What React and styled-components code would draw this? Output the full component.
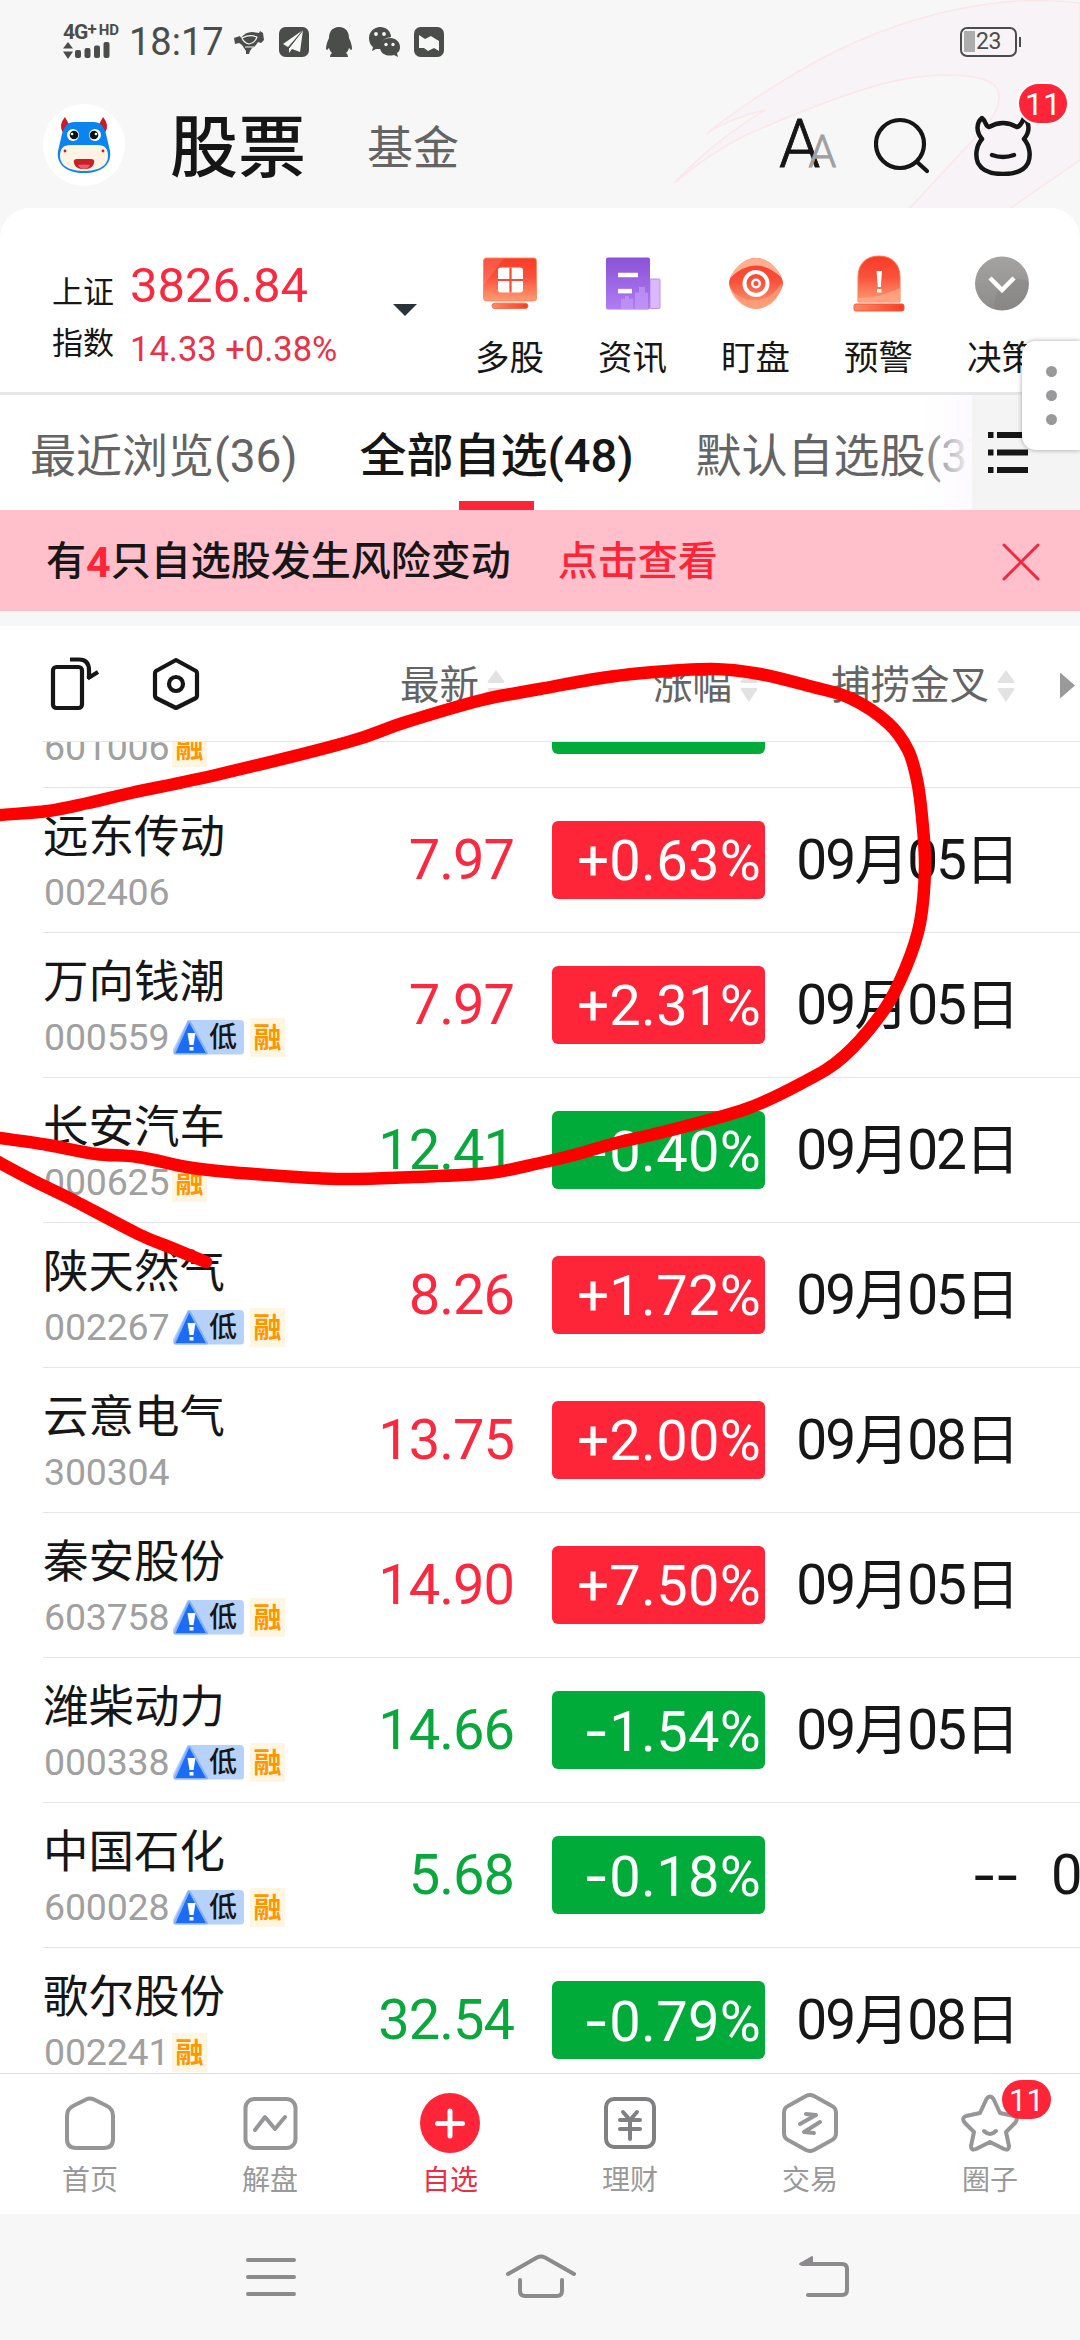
import styled, { createGlobalStyle } from "styled-components";

const stocks = [
  { name: "大秦铁路", code: "601006", tags: ["margin"], price: "6.07", change: "-0.33%", date: "09月05日" },
  { name: "远东传动", code: "002406", tags: [], price: "7.97", change: "+0.63%", date: "09月05日" },
  { name: "万向钱潮", code: "000559", tags: ["low", "margin"], price: "7.97", change: "+2.31%", date: "09月05日" },
  { name: "长安汽车", code: "000625", tags: ["margin"], price: "12.41", change: "-0.40%", date: "09月02日" },
  { name: "陕天然气", code: "002267", tags: ["low", "margin"], price: "8.26", change: "+1.72%", date: "09月05日" },
  { name: "云意电气", code: "300304", tags: [], price: "13.75", change: "+2.00%", date: "09月08日" },
  { name: "秦安股份", code: "603758", tags: ["low", "margin"], price: "14.90", change: "+7.50%", date: "09月05日" },
  { name: "潍柴动力", code: "000338", tags: ["low", "margin"], price: "14.66", change: "-1.54%", date: "09月05日" },
  { name: "中国石化", code: "600028", tags: ["low", "margin"], price: "5.68", change: "-0.18%", date: "--", next: "0" },
  { name: "歌尔股份", code: "002241", tags: ["margin"], price: "32.54", change: "-0.79%", date: "09月08日" },
];

const loop = [
  [-8, 816], [0, 815], [48, 811], [88, 803], [131, 793], [220, 774], [348, 742], [403, 723],
  [482, 700], [540, 689], [595, 679], [643, 673], [712, 669], [760, 674], [809, 686],
  [850, 698], [888, 723], [908, 750], [917, 780], [922, 817], [925, 867], [920, 923],
  [906, 967], [884, 1010], [843, 1057], [802, 1083], [746, 1109], [667, 1131], [616, 1143],
  [574, 1155], [540, 1163], [489, 1173], [413, 1177], [337, 1179], [241, 1173], [193, 1168],
  [138, 1157], [96, 1154], [48, 1145], [0, 1138], [-8, 1137],
];

const tail = [[-8, 1158], [0, 1163], [34, 1181], [69, 1198], [138, 1234], [172, 1248], [206, 1262]];

const smooth = (pts) =>
  pts.reduce((d, p, i) => {
    if (i === 0) return `M${p[0]} ${p[1]}`;
    const a = pts[i - 2] || pts[i - 1];
    const b = pts[i - 1];
    const c = pts[i + 1] || p;
    return `${d}C${b[0] + (p[0] - a[0]) / 6} ${b[1] + (p[1] - a[1]) / 6} ${p[0] - (c[0] - b[0]) / 6} ${
      p[1] - (c[1] - b[1]) / 6
    } ${p[0]} ${p[1]}`;
  }, "");

const Signal = () => (
  <svg width="48" height="18" viewBox="0 0 48 18" fill="#4b4d4b">
    <path d="M5 0l5 6.500H0zM0 9.500h10L5 17z" />
    <rect x="12" y="8" width="6" height="8" rx="2" />
    <rect x="21.500" y="6" width="6" height="10" rx="2" />
    <rect x="31" y="3.500" width="6" height="12.500" rx="2" />
    <rect x="40.500" y="0" width="6" height="16" rx="2" />
  </svg>
);

const StatusIcons = () => (
  <svg width="212" height="32" viewBox="0 0 212 32" fill="#4b4d4b">
    <path d="M0 12l6-2 1 2q4-6 11-6l7 1 1-2 3 2 1 7-3 3-3-1q-3 5-6 6l-2 3-1 3h-3v-3l-4-6-3-2-4 1z" />
    <path d="M8 12q8-4 15-1-2 6-8 7-5-1-7-6zM11 21h9" fill="none" stroke="#f7f7f7" strokeWidth="1.200" />
    <rect x="45" y="1" width="30" height="30" rx="6.500" />
    <path d="M69 4L49 18l5 3zM69 4L55 22v5l3-4 8 3z" fill="#f7f7f7" />
    <path d="M69 4L55 22" stroke="#4b4d4b" strokeWidth="1" />
    <path d="M105 1c7 0 10 5 10 11 2 4 3 8 3 11-1 2-2 0-3-1q-1 4-3 5 2 1 2 4h-18q0-3 2-4-2-1-3-5c-1 1-2 3-3 1 0-3 1-7 3-11 0-6 3-11 10-11z" />
    <path d="M146 1c6 0 11 4 11 10q-10 1-10 10l1 2h-6l-4 2 1-4c-3-2-4-6-4-9 0-6 5-11 11-11z" />
    <path d="M156 12c6 0 10 4 10 9 0 3-1 5-3 6l1 4-4-2c-7 2-14-1-14-8 0-5 4-9 10-9z" />
    <g fill="#f7f7f7">
      <circle cx="142" cy="8" r="1.900" />
      <circle cx="150" cy="8" r="1.900" />
      <circle cx="152" cy="18.500" r="1.700" />
      <circle cx="159" cy="18.500" r="1.700" />
    </g>
    <rect x="180" y="1" width="30" height="30" rx="6.500" />
    <path d="M185 9l6 4 6-3 3 2 5 3v10l-5-3-6 3-4-3-5 0z" fill="#f7f7f7" />
  </svg>
);

const Swoosh = () => (
  <SwooshSvg viewBox="670 0 410 208" fill="#f8f3f7" stroke="#fbe7ea" strokeWidth="1.500">
    <path d="M706 134C750 99 790 76 815 62C870 32 930 12 988 4C1020 -1 1050 0 1080 3V160L1008 210H908L984 128C998 113 1004 95 994 85C980 72 930 74 905 79C870 85 810 107 746 135Q710 153 674 183Q715 140 765 110Q730 118 706 134Z" />
  </SwooshSvg>
);

const Cow = () => (
  <svg width="82" height="82" viewBox="0 0 82 82">
    <circle cx="41" cy="41" r="41" fill="#fff" />
    <path d="M22 13q-7 8-2 16l8-5zM60 13q7 8 2 16l-8-5z" fill="#cc1c28" />
    <path d="M31 18h20q9 0 12 12l4 17c2 14-9 22-26 22S13 61 15 47l4-17q3-12 12-12z" fill="#0a84ee" />
    <path d="M27 41h28q10 0 10 11c0 10-10 15-24 15s-24-5-24-15q0-11 10-11z" fill="#fff3e3" />
    <path d="M34 55h14q4 0 3 4c-1 4-4 6-10 6s-9-2-10-6q-1-4 3-4z" fill="#c91f27" />
    <path d="M35 61q6-1 12 0-2 4-6 4t-6-4z" fill="#f15b63" />
    <circle cx="30" cy="31" r="6" fill="#fff" />
    <circle cx="52" cy="31" r="6" fill="#fff" />
    <circle cx="31" cy="31" r="4.300" fill="#111" />
    <circle cx="51" cy="31" r="4.300" fill="#111" />
    <circle cx="29" cy="30" r="1.300" fill="#fff" />
    <circle cx="53" cy="30" r="1.300" fill="#fff" />
    <circle cx="22" cy="47" r="1.400" fill="#c91f27" />
    <circle cx="60" cy="47" r="1.400" fill="#c91f27" />
  </svg>
);

const SearchIcon = () => (
  <svg width="56" height="58" viewBox="0 0 56 58" fill="none" stroke="#161616" strokeWidth="4.200" strokeLinecap="round">
    <circle cx="26" cy="28" r="24" />
    <path d="M43 46l10 9" />
  </svg>
);

const CowOutline = () => (
  <svg width="58" height="62" viewBox="0 0 58 62" fill="none" stroke="#161616" strokeWidth="4.500" strokeLinecap="round" strokeLinejoin="round">
    <path d="M8 4C2 9 2 18 8 25C2 32 1 42 4 49C8 57 16 60 29 60S50 57 54 49C57 42 56 32 50 25C56 18 56 9 50 4C48 8 47 12 43 13Q29 5 15 13C11 12 12 7 8 4Z" />
    <path d="M18 41q11 4 22 0" />
  </svg>
);

const Gradients = () => (
  <HiddenSvg width="0" height="0">
    <defs>
      <linearGradient id="hot" x1="0" y1="0" x2="0" y2="1">
        <stop offset="0" stopColor="#fb3a26" />
        <stop offset="0.450" stopColor="#f9513b" />
        <stop offset="1" stopColor="#fd9c74" />
      </linearGradient>
      <linearGradient id="bar" x1="0" y1="0" x2="1" y2="0">
        <stop offset="0" stopColor="#fd8a66" />
        <stop offset="1" stopColor="#f83c20" />
      </linearGradient>
      <linearGradient id="violet" x1="0" y1="0" x2="0" y2="1">
        <stop offset="0" stopColor="#8a52d6" />
        <stop offset="1" stopColor="#b07cf2" />
      </linearGradient>
      <linearGradient id="silver" x1="0" y1="0" x2="0" y2="1">
        <stop offset="0" stopColor="#a5a3a2" />
        <stop offset="1" stopColor="#8f8d8c" />
      </linearGradient>
    </defs>
  </HiddenSvg>
);

const toolIcons = {
  multi: (
    <>
      <rect x="2.500" y="4.500" width="53" height="48" rx="3" fill="url(#hot)" stroke="#fb8a5e" />
      <path d="M3 34V6q0-1 1-1h19z" fill="#fff" opacity="0.120" />
      <rect x="11" y="55" width="36" height="6" rx="3" fill="url(#bar)" stroke="#f96a48" />
      <rect x="17" y="15" width="25" height="28" rx="3" fill="#fff" />
      <path d="M29.500 15v28M17 29h25" stroke="#f44a37" strokeWidth="2.200" />
    </>
  ),
  news: (
    <>
      <rect x="46" y="28" width="10" height="33" rx="1" fill="#dcb8fc" stroke="#b88aee" />
      <rect x="2" y="4" width="44" height="58" rx="2" fill="url(#violet)" />
      <path d="M31 62V43h4v-6h6v6h3v19zM17 62V50h4v-3h4v3h4v12z" fill="#c9a0f8" opacity="0.600" />
      <rect x="14" y="21" width="20" height="5" fill="#fff" />
      <rect x="14" y="39" width="14" height="5" fill="#fff" />
    </>
  ),
  watch: (
    <>
      <path d="M29 4C44 4 56 22 56 29S44 55 29 55 2 36 2 29 14 4 29 4z" fill="url(#hot)" />
      <path d="M29 4C42 4 51 15 55 24Q29-1 3 24C7 15 16 4 29 4z" fill="#fdb091" />
      <path d="M3 33q8 14 27 13 17-2 25-18-1 14-11 22-15 9-30 0Q4 42 3 33z" fill="#fda27e" opacity="0.700" />
      <circle cx="29" cy="29.500" r="11.500" fill="none" stroke="#fff" strokeWidth="4" />
      <circle cx="29" cy="29.500" r="5" fill="#fff" />
      <circle cx="29" cy="29.500" r="2.500" fill="#f9513b" />
    </>
  ),
  alarm: (
    <>
      <path d="M8 48V23C8 10 16 2 29 2s21 8 21 21v25z" fill="url(#hot)" stroke="#fb7a55" />
      <path d="M8 44q22 0 42-10v14H8z" fill="#ffb08c" opacity="0.600" />
      <rect x="4" y="50" width="50" height="7" rx="2" fill="url(#bar)" stroke="#f5573a" />
      <path d="M26.500 17h5.500l-1.200 16h-3z" fill="#fff" />
      <rect x="27" y="35" width="4.500" height="3.500" fill="#fff" />
    </>
  ),
  decide: (
    <>
      <circle cx="29" cy="29.500" r="27" fill="url(#silver)" />
      <path d="M22 55q-3-14 9-25 10-8 24-3 2 18-13 26-10 5-20 2z" fill="#82807f" opacity="0.450" />
      <path d="M17 24l12 12 12-12" fill="none" stroke="#fff" strokeWidth="4.500" />
    </>
  ),
};

const tools = [
  { id: "multi", label: "多股", box: "0 0 58 66" },
  { id: "news", label: "资讯", box: "0 0 58 66" },
  { id: "watch", label: "盯盘", box: "0 0 58 59" },
  { id: "alarm", label: "预警", box: "0 0 58 59" },
  { id: "decide", label: "决策", box: "0 0 58 59" },
];

const navItems = [
  {
    label: "首页",
    icon: <path d="M26 6.500q4-2 8 0L47 13q6 3 6 10v23q0 9-9 9H16q-9 0-9-9V23q0-7 6-10z" />,
  },
  {
    label: "解盘",
    icon: (
      <>
        <rect x="5.500" y="6" width="50" height="49" rx="9" />
        <path d="M15 37l10-13 10 12 10-12" />
      </>
    ),
  },
  {
    label: "自选",
    active: true,
    icon: (
      <>
        <circle cx="30" cy="30" r="30" fill="#ff2539" stroke="none" />
        <path d="M30 18v25M17.500 30.500h25" stroke="#fff" strokeWidth="5" />
      </>
    ),
  },
  {
    label: "理财",
    icon: (
      <g stroke="#808082">
        <rect x="6" y="6" width="48" height="48" rx="8" />
        <path d="M23 19l7 8 7-8M20 27h20M20 36h20M30 27v19" />
      </g>
    ),
  },
  {
    label: "交易",
    icon: (
      <>
        <path d="M26 3q4-2 8 0l18 10q4 2 4 7v20q0 5-4 7L34 57q-4 2-8 0L8 47q-4-2-4-7V20q0-5 4-7z" />
        <path d="M20 31l16-9-10-1M40 29l-16 10 10 1" />
      </>
    ),
  },
  {
    label: "圈子",
    badge: "11",
    icon: (
      <>
        <path d="M26.500 6q3.500-5 7 0l6.500 14 14 3q5 2 1 7L46 39l3 14q0 5-5 3L30 49 16 56q-5 2-5-3l3-14L5 30q-4-5 1-7l14-3z" />
        <path d="M24 38q6 6 12 0" />
      </>
    ),
  },
];

const Sign = ({ text }) =>
  text.startsWith("-") ? (
    <>
      <Dash>{text.match(/^-+/)[0]}</Dash>
      {text.replace(/^-+/, "")}
    </>
  ) : (
    text
  );

const SortMark = () => (
  <svg width="18" height="32" viewBox="0 0 18 32" fill="#e2e2e2">
    <path d="M9 0l8 11q1 2-1 2H2q-2 0-1-2zM9 32l8-12q1-2-1-2H2q-2 0-1 2z" />
  </svg>
);

const StockRow = ({ stock }) => {
  const up = stock.change.startsWith("+");
  return (
    <Row>
      <Title>
        <Name>{stock.name}</Name>
        <CodeLine>
          <Code>{stock.code}</Code>
          {stock.tags.includes("low") && (
            <LowTag>
              <svg width="36" height="35" viewBox="0 0 36 35">
                <path d="M17 2L34 33q0 1-2 1H3q-2 0-1-2L15 3q1-2 2-1z" fill="#1c6cf6" stroke="#86b2fa" strokeWidth="2" />
                <path d="M14.500 13h8l-2 12h-4z" fill="#fff" />
                <rect x="16.500" y="27" width="4" height="3.500" fill="#fff" />
              </svg>
              低
            </LowTag>
          )}
          {stock.tags.includes("margin") && <MarginTag>融</MarginTag>}
        </CodeLine>
      </Title>
      <Price $up={up}>{stock.price}</Price>
      <Change $up={up}>
        <Sign text={stock.change} />
      </Change>
      <DateCell>
        <Sign text={stock.date} />
      </DateCell>
      {stock.next && <NextCell>{stock.next}</NextCell>}
    </Row>
  );
};

const App = () => {
  return (
    <Screen>
      <GlobalStyle />
      <Gradients />
      <Top>
        <Swoosh />
        <StatusBar>
          <Network>
            <NetworkLabel>
              4G<sup>+</sup>
              <small>HD</small>
            </NetworkLabel>
            <Signal />
          </Network>
          <Clock>18:17</Clock>
          <StatusIcons />
          <Battery>23</Battery>
        </StatusBar>
        <Header>
          <Cow />
          <Heading>股票</Heading>
          <SubHeading>基金</SubHeading>
          <Actions>
            <FontSize>
              A<span>A</span>
            </FontSize>
            <SearchIcon />
            <MessageButton>
              <CowOutline />
              <CountBadge>11</CountBadge>
            </MessageButton>
          </Actions>
        </Header>
      </Top>

      <IndexPanel>
        <IndexName>
          <span>上证</span>
          <span>指数</span>
        </IndexName>
        <IndexValue>
          <strong>3826.84</strong>
          <span>14.33 +0.38%</span>
        </IndexValue>
        <Caret />
        <Tools>
          {tools.map((tool) => (
            <Tool key={tool.id}>
              <svg width="58" height="59" viewBox={tool.box} preserveAspectRatio="none">
                {toolIcons[tool.id]}
              </svg>
              <span>{tool.label}</span>
            </Tool>
          ))}
        </Tools>
        <Handle>
          <i />
          <i />
          <i />
        </Handle>
      </IndexPanel>

      <Tabs>
        <Tab>最近浏览(36)</Tab>
        <Tab $active>全部自选(48)</Tab>
        <Tab>默认自选股(37)</Tab>
        <TabMenu>
          <svg width="40" height="42" viewBox="0 0 40 42" fill="#161616">
            <path d="M0 0h5.500v6H0zM9 0h31v6H9zM0 17.500h5.500v6H0zM9 17.500h31v6H9zM0 35h5.500v6H0zM9 35h31v6H9z" />
          </svg>
        </TabMenu>
      </Tabs>

      <Notice>
        有<em>4</em>只自选股发生风险变动
        <NoticeLink>点击查看</NoticeLink>
        <svg width="38" height="38" viewBox="0 0 38 38" stroke="#ee2a40" strokeWidth="3" strokeLinecap="round">
          <path d="M2 2l34 34M36 2L2 36" />
        </svg>
      </Notice>

      <Columns>
        <svg width="50" height="54" viewBox="0 0 50 54" fill="none" stroke="#161616" strokeWidth="4.200" strokeLinejoin="round">
          <rect x="3" y="10" width="29" height="41" rx="3.500" />
          <path d="M20 2.500h9q10 0 10 11V22M37.500 21.500L48 15" />
        </svg>
        <svg width="48" height="54" viewBox="0 0 48 54" fill="none" stroke="#161616" strokeWidth="4.200" strokeLinejoin="round">
          <path d="M24 3l20 11q1 1 1 2v23q0 1-1 2L24 51 4 41q-1-1-1-2V16q0-1 1-2z" />
          <circle cx="24" cy="27" r="7" />
        </svg>
        <Column $width={305}>
          最新
          <SortMark />
        </Column>
        <Column $width={253}>
          涨幅
          <SortMark />
        </Column>
        <Column $width={257}>
          捕捞金叉
          <SortMark />
        </Column>
        <More />
      </Columns>

      <List>
        {stocks.map((stock) => (
          <StockRow key={stock.code} stock={stock} />
        ))}
      </List>

      <BottomNav>
        {navItems.map((item) => (
          <NavItem key={item.label} $active={item.active}>
            <svg width="60" height="60" viewBox="0 0 60 60" fill="none" stroke="#969698" strokeWidth="4" strokeLinecap="round" strokeLinejoin="round">
              {item.icon}
            </svg>
            {item.label}
            {item.badge && <NavBadge>{item.badge}</NavBadge>}
          </NavItem>
        ))}
      </BottomNav>

      <SystemBar>
        <svg width="50" height="44" viewBox="0 0 50 44">
          <path d="M2 6h46M2 23h46M2 40h46" />
        </svg>
        <svg width="70" height="44" viewBox="0 0 70 44">
          <path d="M2 20L31 3.500q4-2 8 0L68 20M14 26v11q0 5 5 5h32q5 0 5-5V26" />
        </svg>
        <svg width="52" height="44" viewBox="0 0 52 44">
          <path d="M4 10h40q5 0 5 5v21q0 5-5 5H10" />
          <path d="M2 10l12-7v7z" fill="#8c8a8c" strokeWidth="2" />
        </svg>
      </SystemBar>

      <Markup viewBox="0 0 1080 2340">
        <path d={smooth(loop)} />
        <path d={smooth(tail)} />
      </Markup>
    </Screen>
  );
};

const GlobalStyle = createGlobalStyle`
  * {
    box-sizing: border-box;
  }
  body {
    margin: 0;
    background: #f7f7f7;
    font-family: Roboto, "Noto Sans CJK SC", sans-serif;
    color: #161616;
  }
  svg {
    flex-shrink: 0;
  }
`;

const Screen = styled.div`
  position: relative;
  display: flex;
  flex-direction: column;
  width: 1080px;
  height: 2340px;
  overflow: hidden;
  background: #f7f7f7;
`;

const HiddenSvg = styled.svg`
  display: block;
`;

const Top = styled.header`
  position: relative;
  height: 208px;
  flex-shrink: 0;
`;

const SwooshSvg = styled.svg`
  position: absolute;
  right: 0;
  top: 0;
  width: 410px;
  height: 208px;
`;

const StatusBar = styled.div`
  position: relative;
  display: flex;
  align-items: center;
  height: 84px;
  padding: 0 60px 0 63px;
  color: #4b4d4b;
`;

const Network = styled.div`
  display: flex;
  flex-direction: column;
  width: 66px;
  gap: 1px;
`;

const NetworkLabel = styled.div`
  display: flex;
  align-items: flex-start;
  height: 17px;
  font-size: 21px;
  font-weight: 700;
  line-height: 17px;
  letter-spacing: -1px;
  sup {
    font-size: 17px;
    line-height: 10px;
  }
  small {
    margin-left: 3px;
    font-size: 15px;
    line-height: 12px;
    letter-spacing: 0;
  }
`;

const Clock = styled.div`
  width: 105px;
  font-size: 38px;
  line-height: 84px;
`;

const Battery = styled.div`
  position: relative;
  margin-left: auto;
  width: 57px;
  height: 30px;
  border: 2.500px solid #4b4d4b;
  border-radius: 7px;
  padding-left: 14px;
  background: linear-gradient(#adadad, #adadad) 2px 2px / 11px 21px no-repeat;
  font-size: 23px;
  line-height: 26px;
  letter-spacing: -0.500px;
  margin-right: 3px;
  &::after {
    content: "";
    position: absolute;
    right: -6px;
    top: 8px;
    width: 2px;
    height: 10px;
    background: #4b4d4b;
  }
`;

const Header = styled.div`
  position: relative;
  display: flex;
  align-items: center;
  height: 124px;
  padding: 0 48px 2px 43px;
`;

const Heading = styled.h1`
  margin: 7px 0 0 45px;
  font-size: 68px;
  font-weight: 500;
  line-height: 90px;
`;

const SubHeading = styled.span`
  margin: 6px 0 0 61px;
  font-size: 46px;
  line-height: 60px;
  color: #646464;
`;

const Actions = styled.div`
  display: flex;
  align-items: center;
  margin-left: auto;
  gap: 44px;
`;

const FontSize = styled.div`
  display: flex;
  align-items: baseline;
  font-size: 66px;
  line-height: 76px;
  font-weight: 300;
  margin: 6px -5px 0 0;
  width: 56px;
  -webkit-text-stroke: 0.800px;
  span {
    margin-left: -12px;
    font-size: 45px;
    color: #a0a0a0;
  }
`;

const MessageButton = styled.div`
  position: relative;
  display: flex;
`;

const CountBadge = styled.span`
  position: absolute;
  left: 43px;
  top: -32px;
  min-width: 52px;
  height: 43px;
  border: 2px solid #fff;
  border-radius: 22px;
  background: #ff2539;
  color: #fff;
  font-size: 32px;
  line-height: 40px;
  text-align: center;
`;

const IndexPanel = styled.section`
  position: relative;
  display: flex;
  height: 187px;
  flex-shrink: 0;
  padding-left: 52px;
  border-bottom: 3px solid #e6e6e6;
  border-radius: 30px 30px 0 0;
  background: #fff;
`;

const IndexName = styled.div`
  display: flex;
  flex-direction: column;
  width: 78px;
  padding-top: 59px;
  font-size: 31px;
  line-height: 51px;
`;

const IndexValue = styled.div`
  display: flex;
  flex-direction: column;
  width: 263px;
  padding-top: 53px;
  color: #f92a40;
  strong {
    font-size: 49px;
    font-weight: 400;
    line-height: 50px;
  }
  span {
    margin-top: 13px;
    font-size: 34.500px;
    line-height: 50px;
    color: #e8324a;
  }
`;

const Caret = styled.i`
  margin-top: 96px;
  width: 24px;
  height: 12px;
  background: #29333a;
  clip-path: polygon(0 0, 100% 0, 50% 100%);
`;

const Tools = styled.div`
  display: flex;
  margin-left: 31px;
`;

const Tool = styled.div`
  display: flex;
  flex-direction: column;
  align-items: center;
  width: 123px;
  padding-top: 46px;
  font-size: 34.500px;
  line-height: 50px;
  white-space: nowrap;
  span {
    margin-top: 20px;
  }
`;

const Handle = styled.div`
  position: absolute;
  z-index: 2;
  right: 0;
  top: 133px;
  display: flex;
  flex-direction: column;
  align-items: center;
  justify-content: center;
  gap: 13px;
  width: 58px;
  height: 109px;
  border-radius: 14px 0 0 14px;
  background: #fff;
  box-shadow: 0 0 5px rgba(0, 0, 0, 0.350);
  i {
    width: 11px;
    height: 11px;
    border-radius: 50%;
    background: #99999b;
  }
`;

const Tabs = styled.nav`
  position: relative;
  display: flex;
  gap: 62px;
  height: 115px;
  flex-shrink: 0;
  padding-left: 30px;
  overflow: hidden;
  background: #fff;
`;

const Tab = styled.div`
  display: flex;
  flex-direction: column;
  align-items: center;
  flex-shrink: 0;
  height: 115px;
  font-size: ${({ $active }) => ($active ? 47 : 46)}px;
  font-weight: ${({ $active }) => ($active ? 500 : 400)};
  line-height: 122px;
  color: ${({ $active }) => ($active ? "#161616" : "#646464")};
  &::after {
    content: "";
    margin-top: -16px;
    width: 75px;
    height: 9px;
    flex-shrink: 0;
    background: ${({ $active }) => ($active ? "#ff2539" : "transparent")};
  }
`;

const TabMenu = styled.div`
  position: absolute;
  right: 0;
  top: 0;
  width: 108px;
  height: 115px;
  padding: 37px 16px;
  background: #f4f4f4;
  &::before {
    content: "";
    position: absolute;
    right: 108px;
    top: 0;
    width: 54px;
    height: 115px;
    background: linear-gradient(90deg, rgba(253, 250, 255, 0), #fdfaff);
  }
`;

const Notice = styled.div`
  display: flex;
  align-items: center;
  height: 101px;
  flex-shrink: 0;
  padding: 3px 40px 0 46px;
  background: #ffc0cc;
  font-size: 40px;
  font-weight: 500;
  line-height: 98px;
  em {
    font-style: normal;
    font-weight: 700;
    font-size: 43px;
    color: #ff2539;
  }
  svg {
    margin-left: auto;
  }
`;

const NoticeLink = styled.span`
  margin-left: 47px;
  color: #ff2539;
`;

const Columns = styled.div`
  display: flex;
  align-items: center;
  height: 115px;
  flex-shrink: 0;
  margin-top: 15px;
  padding-left: 50px;
  background: #fff;
  & > svg + svg {
    margin-left: 52px;
  }
`;

const Column = styled.div`
  display: flex;
  justify-content: flex-end;
  align-items: center;
  gap: 8px;
  width: ${({ $width }) => $width}px;
  padding-top: 4px;
  font-size: 39.500px;
  line-height: 60px;
  color: #646464;
`;

const More = styled.i`
  margin: 4px 0 0 45px;
  width: 15px;
  height: 26px;
  background: #999;
  clip-path: polygon(0 0, 100% 50%, 0 100%);
`;

const List = styled.div`
  height: 1332px;
  flex-shrink: 0;
  overflow: hidden;
  padding-left: 43px;
  background: #fff;
  &::before {
    content: "";
    position: relative;
    z-index: 1;
    display: block;
    height: 1px;
    margin-bottom: -99px;
    background: #e4e4e4;
  }
`;

const Row = styled.div`
  display: flex;
  align-items: center;
  height: 145px;
  border-bottom: 1px solid #e4e4e4;
  white-space: nowrap;
  & > * {
    flex-shrink: 0;
  }
`;

const Title = styled.div`
  display: flex;
  flex-direction: column;
  width: 260px;
  height: 144px;
  padding-top: 23px;
`;

const Name = styled.div`
  font-size: 45.500px;
  line-height: 54px;
`;

const CodeLine = styled.div`
  display: flex;
  align-items: center;
  height: 40px;
  margin-top: 7px;
`;

const Code = styled.span`
  width: 129px;
  padding-left: 1px;
  font-size: 37.500px;
  line-height: 40px;
  letter-spacing: -0.200px;
  color: #a0a0a0;
`;

const LowTag = styled.span`
  display: flex;
  align-items: center;
  width: 71px;
  height: 35px;
  margin: 0 6px 0 1px;
  border-radius: 4px;
  background: #b6d2fb;
  clip-path: polygon(18px 0, 100% 0, 100% 100%, 0 100%, 0 30px, 15px 0);
  font-size: 28px;
  font-weight: 500;
  line-height: 35px;
`;

const MarginTag = styled.span`
  width: 35px;
  height: 39px;
  background: #fff5e3;
  color: #ff9600;
  font-size: 28px;
  font-weight: 700;
  line-height: 41px;
  text-align: center;
`;

const Price = styled.div`
  width: 211px;
  font-size: 56px;
  line-height: 80px;
  letter-spacing: -1px;
  text-align: right;
  color: ${({ $up }) => ($up ? "#f92a40" : "#0aa83c")};
`;

const Change = styled.div`
  width: 213px;
  height: 78px;
  margin-left: 38px;
  padding: 2px 4px 0 0;
  border-radius: 6px;
  background: ${({ $up }) => ($up ? "#ff2539" : "#00ab3a")};
  color: #fff;
  font-size: 56px;
  line-height: 76px;
  letter-spacing: 0.300px;
  text-align: right;
`;

const DateCell = styled.div`
  width: 253px;
  font-size: 55px;
  line-height: 80px;
  letter-spacing: -2px;
  text-align: right;
`;

const NextCell = styled.div`
  margin-left: 33px;
  font-size: 56px;
  line-height: 80px;
`;

const Dash = styled.span`
  font-family: Inter, Roboto, sans-serif;
`;

const BottomNav = styled.nav`
  display: grid;
  grid-template-columns: repeat(6, 1fr);
  height: 141px;
  flex-shrink: 0;
  border-top: 1px solid #dedede;
  background: #fff;
`;

const NavItem = styled.div`
  position: relative;
  display: flex;
  flex-direction: column;
  align-items: center;
  gap: 8px;
  padding-top: 19px;
  font-size: 28px;
  line-height: 40px;
  color: ${({ $active }) => ($active ? "#ee2c42" : "#999")};
`;

const NavBadge = styled.span`
  position: absolute;
  left: 102px;
  top: 6px;
  width: 49px;
  height: 39px;
  border-radius: 20px;
  background: #ff2539;
  color: #fff;
  font-size: 31px;
  line-height: 41px;
  text-align: center;
`;

const SystemBar = styled.div`
  display: flex;
  gap: 210px;
  flex-shrink: 0;
  height: 126px;
  padding: 40px 0 0 246px;
  svg {
    fill: none;
    stroke: #8c8a8c;
    stroke-width: 4;
    stroke-linecap: round;
    stroke-linejoin: round;
  }
  svg:last-child {
    margin-left: 12px;
  }
`;

// freehand marker over the list
const Markup = styled.svg`
  position: absolute;
  z-index: 3;
  left: 0;
  top: 0;
  width: 1080px;
  height: 2340px;
  pointer-events: none;
  fill: none;
  stroke: #ff0000;
  stroke-width: 12.500;
  stroke-linecap: round;
  stroke-linejoin: round;
`;

export default App;
